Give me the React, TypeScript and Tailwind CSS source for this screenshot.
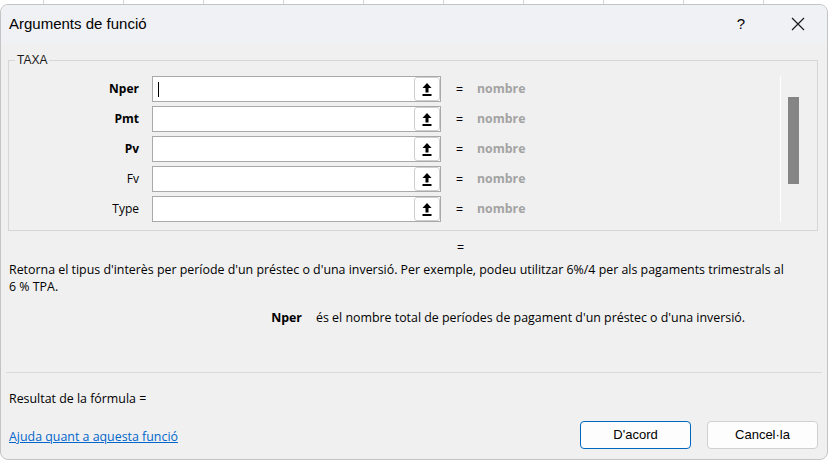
import React from "react";

const UI_FONT = { fontFamily: '"Liberation Sans", Arial, sans-serif' };
const TEXT_FONT = { fontFamily: '"Open Sans", "Liberation Sans", Arial, sans-serif' };

function UploadIcon() {
  return (
    <svg width="10" height="13" viewBox="0 0 10 13" aria-hidden="true">
      <polygon points="5,0 0.5,5 9.5,5" fill="#000" />
      <rect x="3.5" y="4.5" width="3" height="5" fill="#000" />
      <rect x="0.5" y="11" width="9" height="2" fill="#000" />
    </svg>
  );
}

type Arg = { name: string; bold: boolean };

const args: Arg[] = [
  { name: "Nper", bold: true },
  { name: "Pmt", bold: true },
  { name: "Pv", bold: true },
  { name: "Fv", bold: false },
  { name: "Type", bold: false },
];

function ArgRow({ arg, first }: { arg: Arg; first: boolean }) {
  return (
    <div className="flex items-center h-[26px]">
      <div
        className={`w-[130px] text-right text-[12px] leading-[16px] text-black ${arg.bold ? "font-bold" : "font-normal"}`}
        style={TEXT_FONT}
      >
        {arg.name}
      </div>
      <div className="ml-[13px] w-[289px] h-[26px] border border-[#a9a9a9] bg-white flex items-center">
        <div className="flex-1 pl-[5px] flex items-center">
          {first && <div className="w-px h-[15px] bg-black" />}
        </div>
        <div className="w-[26px] h-[24px] border border-[#cfcfcf] rounded-[3px] bg-white flex items-center justify-center">
          <UploadIcon />
        </div>
      </div>
      <div className="ml-[15px] text-[12px] text-black" style={UI_FONT}>=</div>
      <div className="ml-[14px] text-[12.3px] leading-[16px] font-bold text-[#a3a3a3]" style={TEXT_FONT}>
        nombre
      </div>
    </div>
  );
}

export default function App() {
  const gridCells = Array.from({ length: 10 });
  return (
    <div className="w-[828px] h-[460px] bg-white overflow-hidden flex flex-col" style={UI_FONT}>
      {/* sheet gridlines peeking above the dialog */}
      <div className="h-[4px] flex shrink-0">
        <div className="w-[44px] shrink-0 border-r border-[#d4d4d4]" />
        {gridCells.map((_, i) => (
          <div key={i} className="w-[80px] shrink-0 border-r border-[#d4d4d4]" />
        ))}
      </div>

      <div className="flex-1 flex flex-col rounded-[8px] border border-[#c4c4c4] bg-[#f0f0f0] overflow-hidden">
        {/* title bar */}
        <div className="h-[38px] shrink-0 bg-[#f0f1f5] flex items-center pl-[8px]">
          <div className="text-[15px] text-black">Arguments de funció</div>
          <div className="flex-1" />
          <div className="text-[15px] text-black mr-[46px]">?</div>
          <svg width="14" height="14" viewBox="0 0 14 14" className="mr-[22px]" aria-hidden="true">
            <path d="M1 1 L13 13 M13 1 L1 13" stroke="#1a1a1a" strokeWidth="1.2" fill="none" />
          </svg>
        </div>

        {/* body */}
        <div className="flex-1 flex flex-col px-[7px]">
          <fieldset className="mt-[10px] h-[178px] w-[810px] border border-[#d6d6d6] pl-0 pr-0">
            <legend className="ml-[6px] px-[2px] text-[12px] text-[#1a1a1a] leading-[14px]">TAXA</legend>
            <div className="flex h-[154px] pt-[9px]">
              <div className="flex flex-col gap-[4px]">
                {args.map((a, i) => (
                  <ArgRow key={a.name} arg={a} first={i === 0} />
                ))}
              </div>
              <div className="flex-1" />
              <div className="w-px h-[146px] bg-white" />
              <div className="w-[11px] ml-[7px] mr-[18px] pt-[21px]">
                <div className="h-[87px] bg-[#858585]" />
              </div>
            </div>
          </fieldset>

          <div className="mt-[9px] pl-[449px] text-[12px] text-black leading-[14px]">=</div>

          <div style={TEXT_FONT}>
            <p className="mt-[7px] pl-px text-[12.4px] leading-[17px] text-black w-[792px]">
              Retorna el tipus d'interès per període d'un préstec o d'una inversió. Per exemple, podeu utilitzar 6%/4 per als pagaments trimestrals al 6&nbsp;% TPA.
            </p>

            <div className="mt-[14px] flex items-baseline text-[12.4px] leading-[17px] text-black">
              <div className="w-[294px] text-right font-bold">Nper</div>
              <div className="ml-[14px]">és el nombre total de períodes de pagament d'un préstec o d'una inversió.</div>
            </div>
          </div>

          <div className="mt-[46px] h-px bg-[#dadada] -mx-[2px]" />

          <div className="mt-[18px] pl-px text-[12.4px] text-black leading-[16px]" style={TEXT_FONT}>
            Resultat de la fórmula =
          </div>

          <div className="mt-[14px] flex items-center pl-px">
            <a
              href="#"
              className="mt-[5px] text-[12.4px] text-[#0066cc] underline"
              style={TEXT_FONT}
              onClick={(e) => e.preventDefault()}
            >
              Ajuda quant a aquesta funció
            </a>
            <div className="flex-1" />
            <button className="w-[111px] h-[28px] rounded-[4px] border border-[#0067c0] bg-[#fdfdfd] text-[13px] text-black">
              D'acord
            </button>
            <button className="ml-[16px] mr-[2px] w-[111px] h-[28px] rounded-[4px] border border-[#d0d0d0] bg-[#fdfdfd] text-[13px] text-black">
              Cancel·la
            </button>
          </div>
        </div>
      </div>
    </div>
  );
}
